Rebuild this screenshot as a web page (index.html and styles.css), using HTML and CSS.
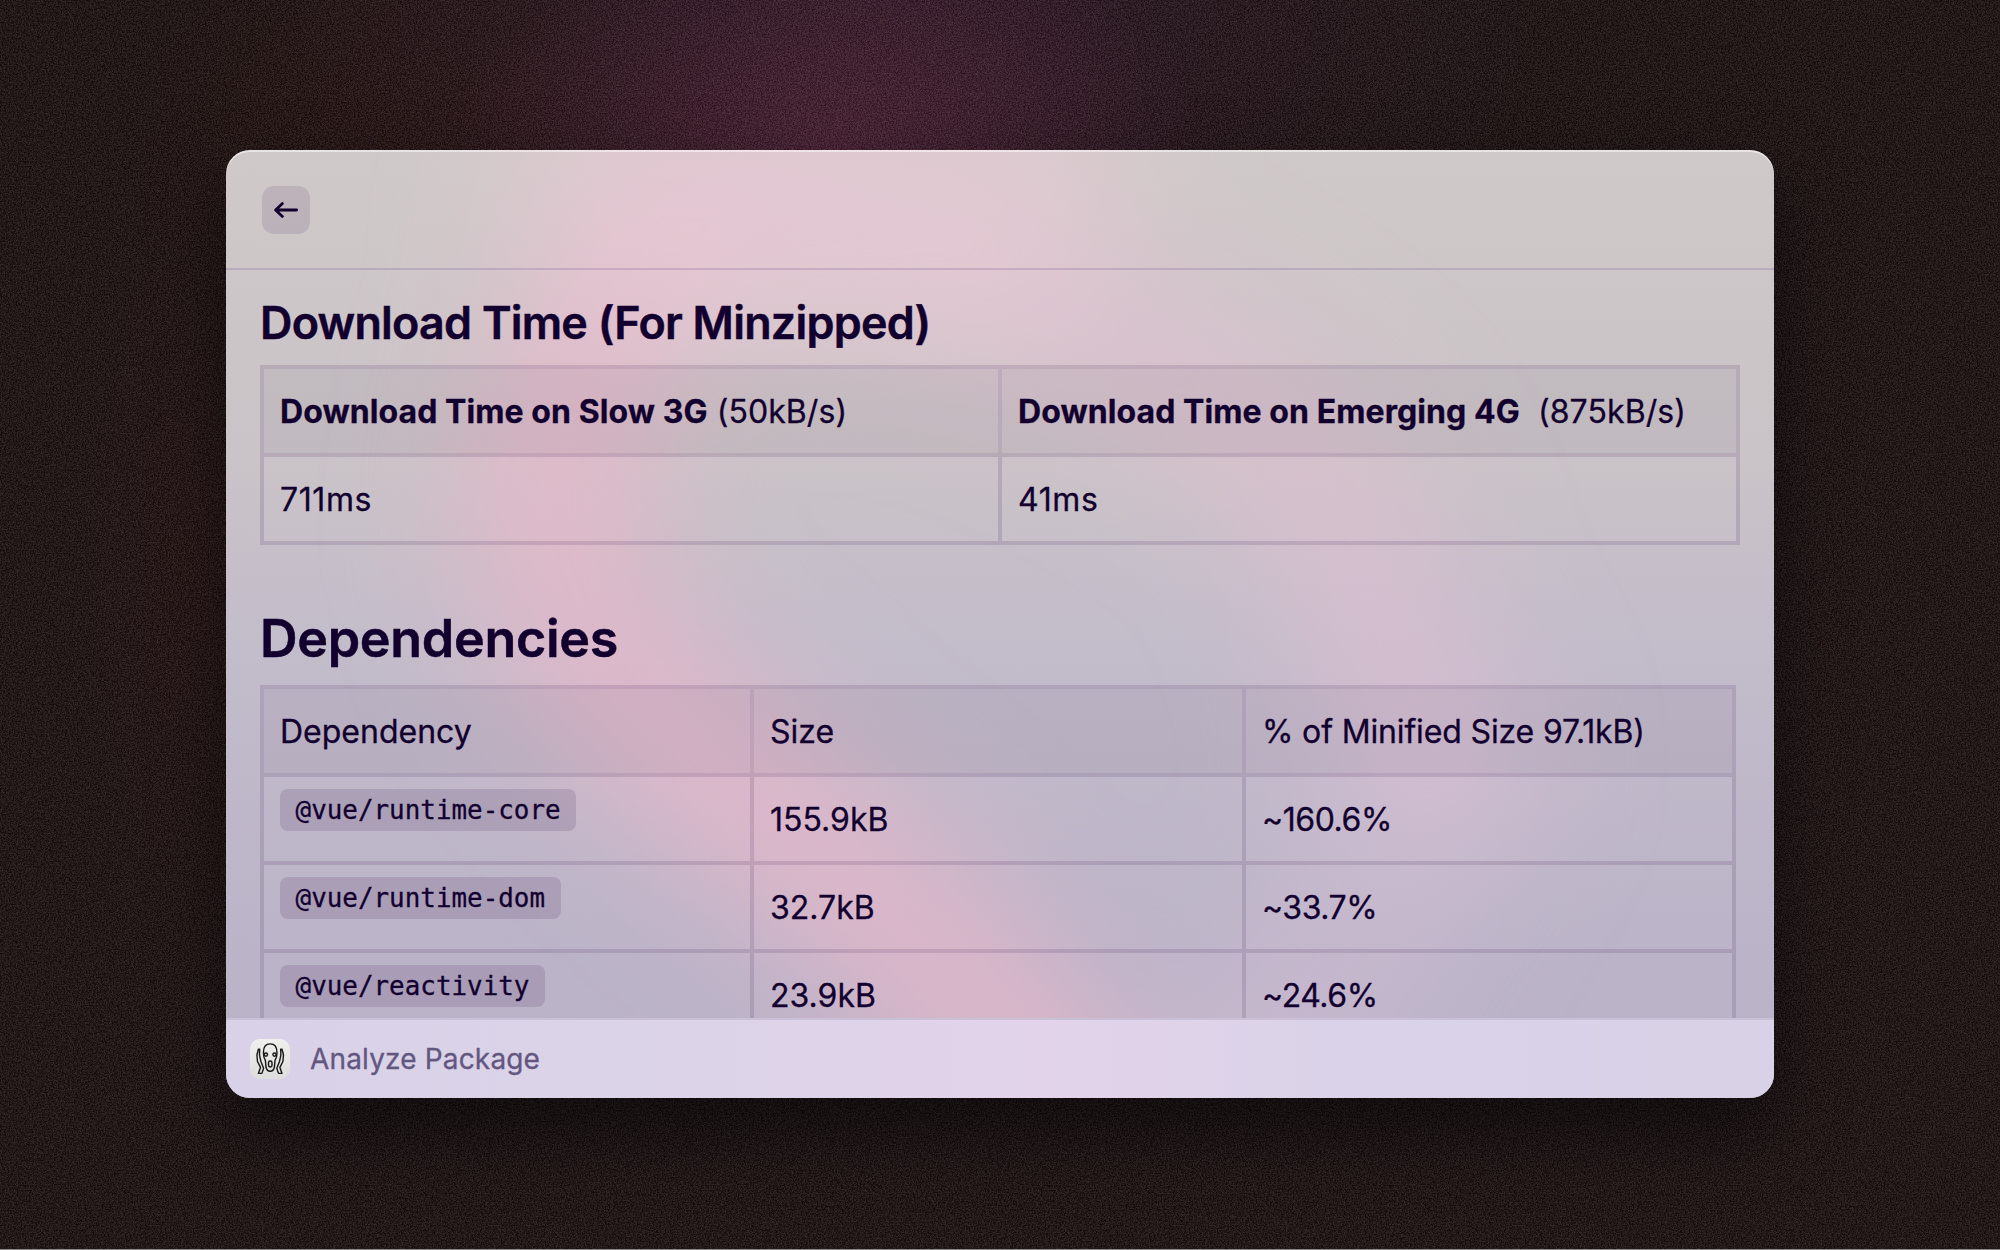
FILE: index.html
```html
<!DOCTYPE html>
<html lang="en">
<head>
<meta charset="utf-8">
<title>Analyze Package</title>
<link rel="stylesheet" href="styles.css">
</head>
<body>
<div class="desktop">
  <svg class="grain" aria-hidden="true">
    <filter id="noise" x="0" y="0" width="100%" height="100%" color-interpolation-filters="sRGB">
      <feTurbulence type="fractalNoise" baseFrequency="0.75" numOctaves="2" seed="4"/>
      <feColorMatrix values="2.6 0 0 0 -0.8  2.6 0 0 0 -0.8  2.6 0 0 0 -0.8  0 0 0 0 1"/>
    </filter>
    <rect width="100%" height="100%" filter="url(#noise)"/>
  </svg>
  <main class="window">
    <svg class="aurora" viewBox="0 0 1548 948" aria-hidden="true">
      <filter id="soft" x="-40%" y="-40%" width="180%" height="180%"><feGaussianBlur stdDeviation="66"/></filter>
      <g filter="url(#soft)" fill="none" stroke-linecap="round">
        <path d="M440 90C370 180 320 270 325 380S440 580 560 680 760 840 840 980" stroke="#e6b7ca" stroke-width="160" stroke-opacity=".85"/>
        <path d="M480 60Q700 110 900 200T1130 400 1220 620" stroke="#e2bfd2" stroke-width="150" stroke-opacity=".62"/>
        <path d="M420 60H760" stroke="#e8cbd6" stroke-width="260" stroke-opacity=".65"/>
        <path d="M1220 600Q1130 820 1000 940" stroke="#d6c0d6" stroke-width="160" stroke-opacity=".4"/>
      </g>
    </svg>
    <header class="topbar">
      <button class="back" aria-label="Back">
        <svg width="24" height="16" viewBox="0 0 24 16" fill="none" stroke="currentColor" stroke-width="2.8" stroke-linecap="round" stroke-linejoin="round"><path d="M22.6 8H2M8.4 1.6 1.6 8l6.8 6.4"/></svg>
      </button>
    </header>
    <section class="content">
      <h2 class="title">Download Time (For Minzipped)</h2>
      <div class="grid grid-two">
        <div class="cell head"><p><strong>Download Time on Slow 3G</strong> (50kB/s)</p></div>
        <div class="cell head"><p><strong>Download Time on Emerging 4G</strong>&nbsp; (875kB/s)</p></div>
        <div class="cell loose">711ms</div>
        <div class="cell loose">41ms</div>
      </div>
      <h1 class="title title-large">Dependencies</h1>
      <div class="grid grid-three">
        <div class="cell head">Dependency</div>
        <div class="cell head">Size</div>
        <div class="cell head tight">% of Minified Size 97.1kB)</div>
        <div class="cell"><code class="tag">@vue/runtime-core</code></div>
        <div class="cell">155.9kB</div>
        <div class="cell percent">~160.6%</div>
        <div class="cell"><code class="tag">@vue/runtime-dom</code></div>
        <div class="cell">32.7kB</div>
        <div class="cell percent">~33.7%</div>
        <div class="cell"><code class="tag">@vue/reactivity</code></div>
        <div class="cell">23.9kB</div>
        <div class="cell percent">~24.6%</div>
      </div>
    </section>
    <footer class="footer">
      <span class="appicon">
        <svg width="40" height="40" viewBox="0 0 40 40" fill="none" stroke="#161616" stroke-width="1.4" stroke-linecap="round" stroke-linejoin="round">
          <path d="M15.400 21.500C14 19.500 13.400 17 13.400 13.500C13.400 8 16.200 4.900 20.200 4.900S27 8 27 13.500c0 3.500-.6 6-2 8L24.400 28c-.6 3-2 4.300-4.200 4.300S16.600 31 16 28Z"/>
          <circle cx="15.900" cy="15.600" r="1.600"/><circle cx="24.500" cy="15.600" r="1.600"/>
          <rect x="18.500" y="22" width="3.500" height="6" rx="1.700"/>
          <path d="M8.400 10.200 6.900 16l.6 6.500 3 5.900-2.100 6h3.500l1.700-5.100-2.800-7.100-1.300-6.200.2-5.800Z"/>
          <path d="m32 10.200 1.500 5.800-.6 6.500-3 5.900 2.100 6h-3.500l-1.700-5.100 2.800-7.100 1.300-6.200-.2-5.800Z"/>
        </svg>
      </span>
      <span class="footer-label">Analyze Package</span>
    </footer>
  </main>
</div>
</body>
</html>
```
FILE: styles.css
```css
* { box-sizing: border-box; }
body { margin: 0; }

.desktop {
  position: relative;
  width: 2000px;
  height: 1250px;
  padding: 150px 226px 151px;
  border-bottom: 1px solid #8c8888;
  overflow: hidden;
  font-family: Inter, "Liberation Sans", sans-serif;
  color: #12002e;
  background:
    radial-gradient(ellipse 380px 240px at 830px 150px, rgba(84, 30, 54, .65), transparent),
    radial-gradient(ellipse 640px 380px at 900px 0, rgba(50, 20, 42, .65), transparent),
    radial-gradient(ellipse 360px 240px at 430px 110px, rgba(38, 12, 8, .5), transparent),
    radial-gradient(ellipse 150px 460px at 200px 560px, rgba(42, 12, 12, .4), transparent),
    #160b0b;
}

.grain {
  position: absolute;
  inset: 0;
  width: 100%;
  height: 100%;
  opacity: .12;
}

.window {
  position: relative;
  display: flex;
  flex-direction: column;
  width: 1548px;
  height: 948px;
  border-radius: 24px;
  overflow: hidden;
  background: linear-gradient(#d0c9c9 0, #cac3c7 32%, #c3bcca 52%, #bbb3c8 86%);
  box-shadow: 0 32px 70px rgba(0, 0, 0, .5);
}

.aurora {
  position: absolute;
  inset: 0;
  width: 1548px;
  height: 948px;
}

.topbar {
  position: relative;
  flex: 0 0 120px;
  padding: 36px 36px 34px;
  border-bottom: 2px solid rgba(90, 60, 120, .19);
  box-shadow: inset 0 2px 0 rgba(255, 255, 255, .5);
  border-radius: 24px 24px 0 0;
}

.back {
  display: grid;
  place-items: center;
  width: 48px;
  height: 48px;
  padding: 0;
  border: 0;
  border-radius: 12px;
  color: #12002e;
  background: rgba(60, 30, 80, .13);
}

.content {
  position: relative;
  flex: 1;
  min-height: 0;
  padding: 0 34px;
  overflow: hidden;
}

.title {
  margin: 0;
  padding-top: 26px;
  height: 95px;
  font-size: 44.800px;
  line-height: 54px;
  font-weight: 600;
  letter-spacing: -.72px;
  -webkit-text-stroke: .5px currentColor;
  white-space: nowrap;
}

.title-large {
  height: 140px;
  padding-top: 62px;
  font-size: 52px;
  line-height: 64px;
  letter-spacing: -.3px;
}

.grid {
  --line: rgba(75, 50, 95, .17);
  display: grid;
  grid-auto-rows: 88px;
  border-left: 4px solid var(--line);
  border-top: 4px solid var(--line);
}

.grid-two { width: 1480px; grid-template-columns: 1fr 1fr; }
.grid-three { width: 1476px; grid-template-columns: 490px 492px 490px; }

.cell {
  padding: 21px 16px 19px;
  border-right: 4px solid var(--line);
  border-bottom: 4px solid var(--line);
  font-size: 32px;
  line-height: 44px;
  -webkit-text-stroke: .3px currentColor;
  white-space: nowrap;
}

.cell p { margin: 0; letter-spacing: .08px; }
.cell strong { font-weight: 700; }
.loose { letter-spacing: .6px; }
.tight { letter-spacing: -.15px; }
.percent { letter-spacing: -.45px; }
.head { background: rgba(75, 50, 90, .07); background-clip: padding-box; }

.tag {
  display: block;
  width: max-content;
  height: 42px;
  margin-top: -9px;
  padding: 0 15.600px;
  border-radius: 8px;
  background: rgba(75, 50, 95, .17);
  font: 25.900px/43px "DejaVu Sans Mono", monospace;
  letter-spacing: 0;
}

.footer {
  position: relative;
  display: flex;
  align-items: center;
  flex: 0 0 80px;
  padding: 0 24px;
  border-top: 2px solid #c9bfd6;
  background: linear-gradient(90deg, #d9d1e7, #dbd3e8 25%, #e2d3ea 53%, #dad2e8 72%, #d9d1e6);
}

.appicon {
  width: 40px;
  height: 40px;
  border-radius: 10px;
  background: linear-gradient(#efefee, #dddddb);
}

.footer-label {
  margin-left: 20px;
  font-size: 28px;
  letter-spacing: .16px;
  -webkit-text-stroke: .3px currentColor;
  color: #635781;
}
```
